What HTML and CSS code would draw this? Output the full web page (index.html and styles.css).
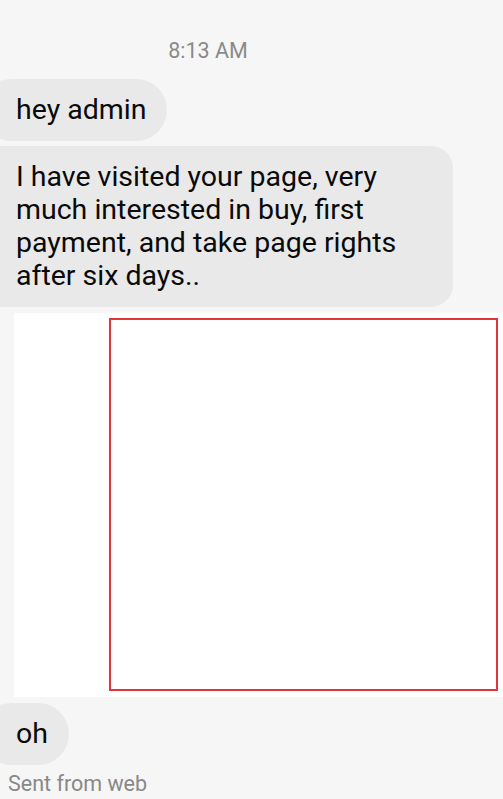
FILE: index.html
```html
<!DOCTYPE html>
<html lang="en">
<head>
  <meta charset="UTF-8">
  <meta name="viewport" content="width=device-width, initial-scale=1.0">
  <title>Chat</title>
  <link rel="stylesheet" href="styles.css">
</head>
<body>
  <div class="chat">
    <div class="time">8:13 AM</div>

    <!-- Mensajes recibidos -->
    <div class="msg">hey admin</div>
    <div class="msg msg-long">I have visited your page, very much interested in buy, first payment, and take page rights after six days..</div>

    <!-- Imagen adjunta -->
    <div class="attachment">
      <div class="attachment-frame"></div>
    </div>

    <div class="msg">oh</div>
    <div class="meta">Sent from web</div>
  </div>
</body>
</html>
```

FILE: styles.css
```css
/* Estilos generales */
body {
  margin: 0;
  background-color: #f6f6f6;
  font-family: Roboto, "Liberation Sans", Arial, sans-serif;
  overflow: hidden;
}

.chat {
  display: flex;
  flex-direction: column;
  align-items: flex-start;
  padding-top: 38px;
}

/* Hora */
.time {
  align-self: stretch;
  margin-bottom: 15px;
  padding-right: 87px;
  text-align: center;
  font-size: 21.5px;
  line-height: 26px;
  color: #8a8a8a;
}

/* Burbujas */
.msg {
  box-sizing: border-box;
  margin-left: -20px;
  padding: 14px 21px 15px 36px;
  max-width: 473px;
  background-color: #e9e9e9;
  border-radius: 31px;
  font-size: 28.5px;
  line-height: 33px;
  color: #0a0a0a;
}

.msg + .msg {
  margin-top: 5px;
}

.msg-long {
  border-radius: 22px;
}

/* Adjunto */
.attachment {
  box-sizing: border-box;
  align-self: stretch;
  margin: 6px 0 6px 14px;
  padding: 5px 5px 6px 95px;
  height: 384px;
  background-color: #ffffff;
}

.attachment-frame {
  box-sizing: border-box;
  height: 100%;
  border: 2px solid #e2343a;
}

.meta {
  margin: 6px 0 0 8px;
  font-size: 21.5px;
  line-height: 26px;
  color: #888;
}
```
